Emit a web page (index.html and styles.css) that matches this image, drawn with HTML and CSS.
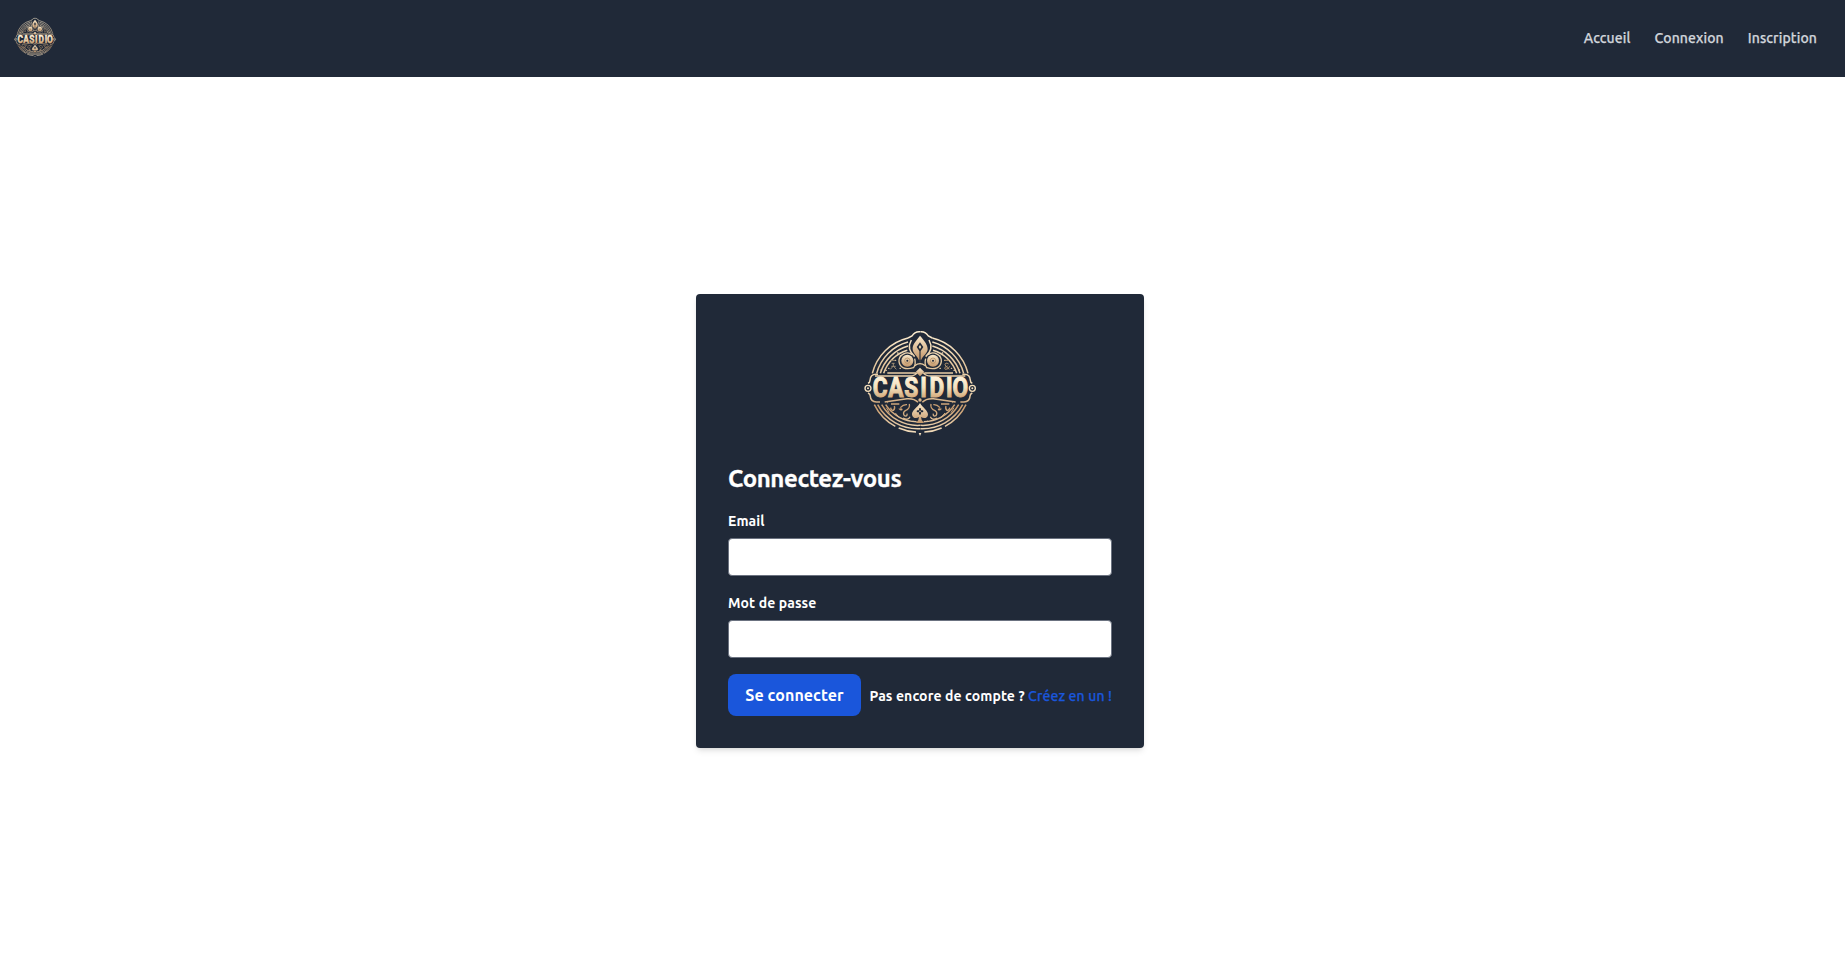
FILE: index.html
```html
<!DOCTYPE html>
<html lang="fr">
<head>
<meta charset="utf-8">
<title>Casidio - Connexion</title>
<link rel="stylesheet" href="styles.css">
</head>
<body>
<header class="navbar">
  <a class="brand" href="#"><svg class="brand-logo" viewBox="0 18 420 360"><use href="#casidio"/></svg></a>
  <nav class="nav-links">
    <a href="#">Accueil</a>
    <a href="#">Connexion</a>
    <a href="#">Inscription</a>
  </nav>
</header>
<main class="page">
  <form class="card">
    <svg class="card-logo" viewBox="0 18 420 360">
      <defs>
        <linearGradient id="gold" gradientUnits="userSpaceOnUse" x1="0" y1="30" x2="0" y2="350">
          <stop offset="0" stop-color="#fff0d4"/><stop offset=".35" stop-color="#e3c59b"/><stop offset=".55" stop-color="#f8e4c2"/><stop offset=".72" stop-color="#c79a6c"/><stop offset="1" stop-color="#fbe9ca"/>
        </linearGradient>
        <linearGradient id="letters" gradientUnits="userSpaceOnUse" x1="0" y1="172" x2="0" y2="234">
          <stop offset="0" stop-color="#fff3da"/><stop offset=".5" stop-color="#f4e0be"/><stop offset="1" stop-color="#d3a878"/>
        </linearGradient>
        <linearGradient id="petal" x1="0" y1="0" x2="0" y2="1">
          <stop offset="0" stop-color="#fae9ca"/><stop offset="1" stop-color="#c4976a"/>
        </linearGradient>
        <g id="wing">
          <path d="M67 160A145 145 0 0 1 174 54M80 160A132 132 0 0 1 174 66M91 160A121 121 0 0 1 174 78M101 160A111 111 0 0 1 172 91" stroke-width="4.5"/>
          <path d="M73 254A146 146 0 0 0 136 319M146 324A146 146 0 0 0 198 336M83 254A136 136 0 0 0 210 326M95 254A124 124 0 0 0 210 316M107 254A112 112 0 0 0 200 305" stroke-width="4.5"/>
          <path d="M210 35C198 34 191 39 186 48L174 54M184 60C174 78 178 96 194 110" stroke-width="4.5"/>
          <path d="M112 159H198M75 168H180Q196 167 201 159" stroke-width="4"/>
          <path d="M84 163H78Q61 163 60 181Q60 188 54 190M54 219Q61 222 61 229Q62 245 79 246H90M104 246L171 236Q194 235 204 247" stroke-width="4.5"/>
          <circle cx="54" cy="205" r="9" stroke-width="4"/><circle cx="54" cy="205" r="3" fill="url(#gold)" stroke="none"/>
          <circle cx="172" cy="122" r="18" fill="url(#petal)" stroke="none"/>
          <circle cx="172" cy="122" r="8" stroke="#a98258" stroke-width="2"/><circle cx="172" cy="122" r="3" fill="#202938" stroke="none"/>
          <path d="M187 104C170 91 145 105 147 125C149 142 166 151 190 143M194 116Q199 133 190 144" stroke-width="4"/>
          <path d="M143 99h1M151 108h1M136 121h1M150 145h1M116 145h1M108 151h1M93 150h1" stroke-width="4" stroke-linecap="round"/>
          <path d="M123 252H148M122 263Q123 272 130 271Q136 267 133 258M151 263Q160 253 171 254M178 252Q181 266 166 272Q157 278 163 287Q173 291 171 281M159 294Q174 303 180 290" stroke-width="4"/>
          <path d="M145 266Q156 262 158 268Q155 276 145 266Z" fill="url(#gold)" stroke="none"/>
          <path d="M136 279L150 295M109 263l9 15M177 302h2M188 303h2M112 248h2" stroke-width="3"/>
        </g>
        <g id="casidio" fill="none" stroke="url(#gold)">
          <use href="#wing"/>
          <use href="#wing" transform="matrix(-1 0 0 1 421 0)"/>
          <path d="M210 47C195 66 187 75 188 88C189 101 200 106 206 119H214C220 106 232 101 233 88C233 75 225 64 210 47Z" fill="url(#petal)" stroke="none"/>
          <path d="M210 67L200 81L210 96L220 81Z" fill="#202938" stroke="none"/>
          <path d="M210 75l-4 6 4 6 4-6Z" fill="#efd5ab" stroke="none"/>
          <path d="M210 94V139" stroke="#3c3d42" stroke-width="4"/>
          <path d="M194 137Q210 125 226 137" stroke-width="4"/>
          <path d="M210 143L223 156L210 169L197 156Z" fill="url(#petal)" stroke="none"/>
          <path d="M121 121H136M125 130H134M130 129V138L121 148M130 138L139 148M124 139H137" stroke="#9c8b73" stroke-width="3"/>
          <path d="M283 121H297M296 132Q286 126 285 134Q286 139 298 148M293 138Q280 142 286 148Q295 149 299 139" stroke="#b6956e" stroke-width="3"/>
          <text class="logo-text" transform="scale(.84 1)" x="108 163.5 218.5 263 310.5 354.5 394" y="231" fill="url(#letters)" stroke="url(#letters)" stroke-width="3">CASIDIO</text>
          <circle cx="210" cy="240" r="5" fill="url(#gold)" stroke="none"/>
          <path d="M210 249C202 263 185 271 186 284C188 295 199 297 207 291Q207 302 198 309H222Q213 302 213 291C222 297 233 294 234 284C234 271 218 263 210 249Z" fill="url(#petal)" stroke="none"/>
          <path d="M210 267v14M203 274h14" stroke="#202938" stroke-width="6" stroke-linecap="round"/>
          <circle cx="210" cy="274" r="2.5" fill="#efd5ab" stroke="none"/>
          <path d="M206 339h8l-4 9Z" fill="url(#gold)" stroke="none"/>
        </g>
      </defs>
      <use href="#casidio"/>
    </svg>
    <h1 class="title">Connectez-vous</h1>
    <label class="label" for="email">Email</label>
    <input class="field" id="email" type="email">
    <label class="label" for="password">Mot de passe</label>
    <input class="field" id="password" type="password">
    <div class="actions">
      <button class="submit" type="button">Se connecter</button>
      <p class="signup">Pas encore de compte ? <a href="#">Créez en un !</a></p>
    </div>
  </form>
</main>
</body>
</html>
```
FILE: styles.css
```css
* { box-sizing: border-box; }
body {
  margin: 0;
  height: 963px;
  display: flex;
  flex-direction: column;
  background: #fff;
  color: #fff;
  font-family: Ubuntu, "Noto Sans", sans-serif;
  overflow: hidden;
}
a { color: inherit; text-decoration: none; }
.navbar {
  height: 77px;
  flex: none;
  display: flex;
  align-items: center;
  justify-content: space-between;
  padding: 0 28px 0 9px;
  background: #202938;
}
.brand-logo { display: block; width: 52px; height: 45px; }
.nav-links {
  display: flex;
  gap: 24px;
  padding-bottom: 2px;
  font-size: 14px;
  line-height: 20px;
  font-weight: 500;
  letter-spacing: .11px;
  -webkit-text-stroke: .25px currentColor;
  color: #d1d5db;
}
.page { flex: 1; display: flex; justify-content: center; align-items: flex-start; padding: 217px 5px 0 0; }
.card {
  width: 448px;
  height: 454px;
  padding: 32px;
  border-radius: 4px;
  background: #202938;
  box-shadow: 0 4px 6px -1px rgba(0,0,0,.1), 0 2px 4px -2px rgba(0,0,0,.1);
}
.card-logo { display: block; width: 140px; height: 120px; margin: 0 auto 17px; }
.title { margin: 0 0 16px; font-size: 24px; line-height: 32px; font-weight: 700; letter-spacing: -.41px; -webkit-text-stroke: .3px currentColor; }
.label { display: block; margin-bottom: 7px; font-size: 14px; line-height: 20px; font-weight: 600; letter-spacing: .1px; }
.field {
  display: block;
  width: 100%;
  height: 38px;
  margin: 0 0 17px;
  padding: 8px 12px;
  border: 1px solid #6b7280;
  border-radius: 4px;
  background: #fff;
  box-shadow: 0 1px 2px rgba(0,0,0,.05);
}
.actions { display: flex; align-items: center; justify-content: space-between; margin-top: -1px; }
.submit {
  width: 133px;
  height: 42px;
  padding: 0;
  border: 0;
  border-radius: 8px;
  background: #1a56db;
  color: #fff;
  font: 600 16px/24px Ubuntu, "Noto Sans", sans-serif;
  letter-spacing: .08px;
  white-space: nowrap;
}
.signup { margin: 0; padding-top: 2px; font-size: 14px; line-height: 20px; font-weight: 600; letter-spacing: .1px; white-space: nowrap; }
.signup a { color: #1a56db; font-weight: 500; letter-spacing: .12px; -webkit-text-stroke: .25px currentColor; }
.logo-text { font: 700 81px Roboto, "Noto Sans", sans-serif; text-anchor: middle; }
```
